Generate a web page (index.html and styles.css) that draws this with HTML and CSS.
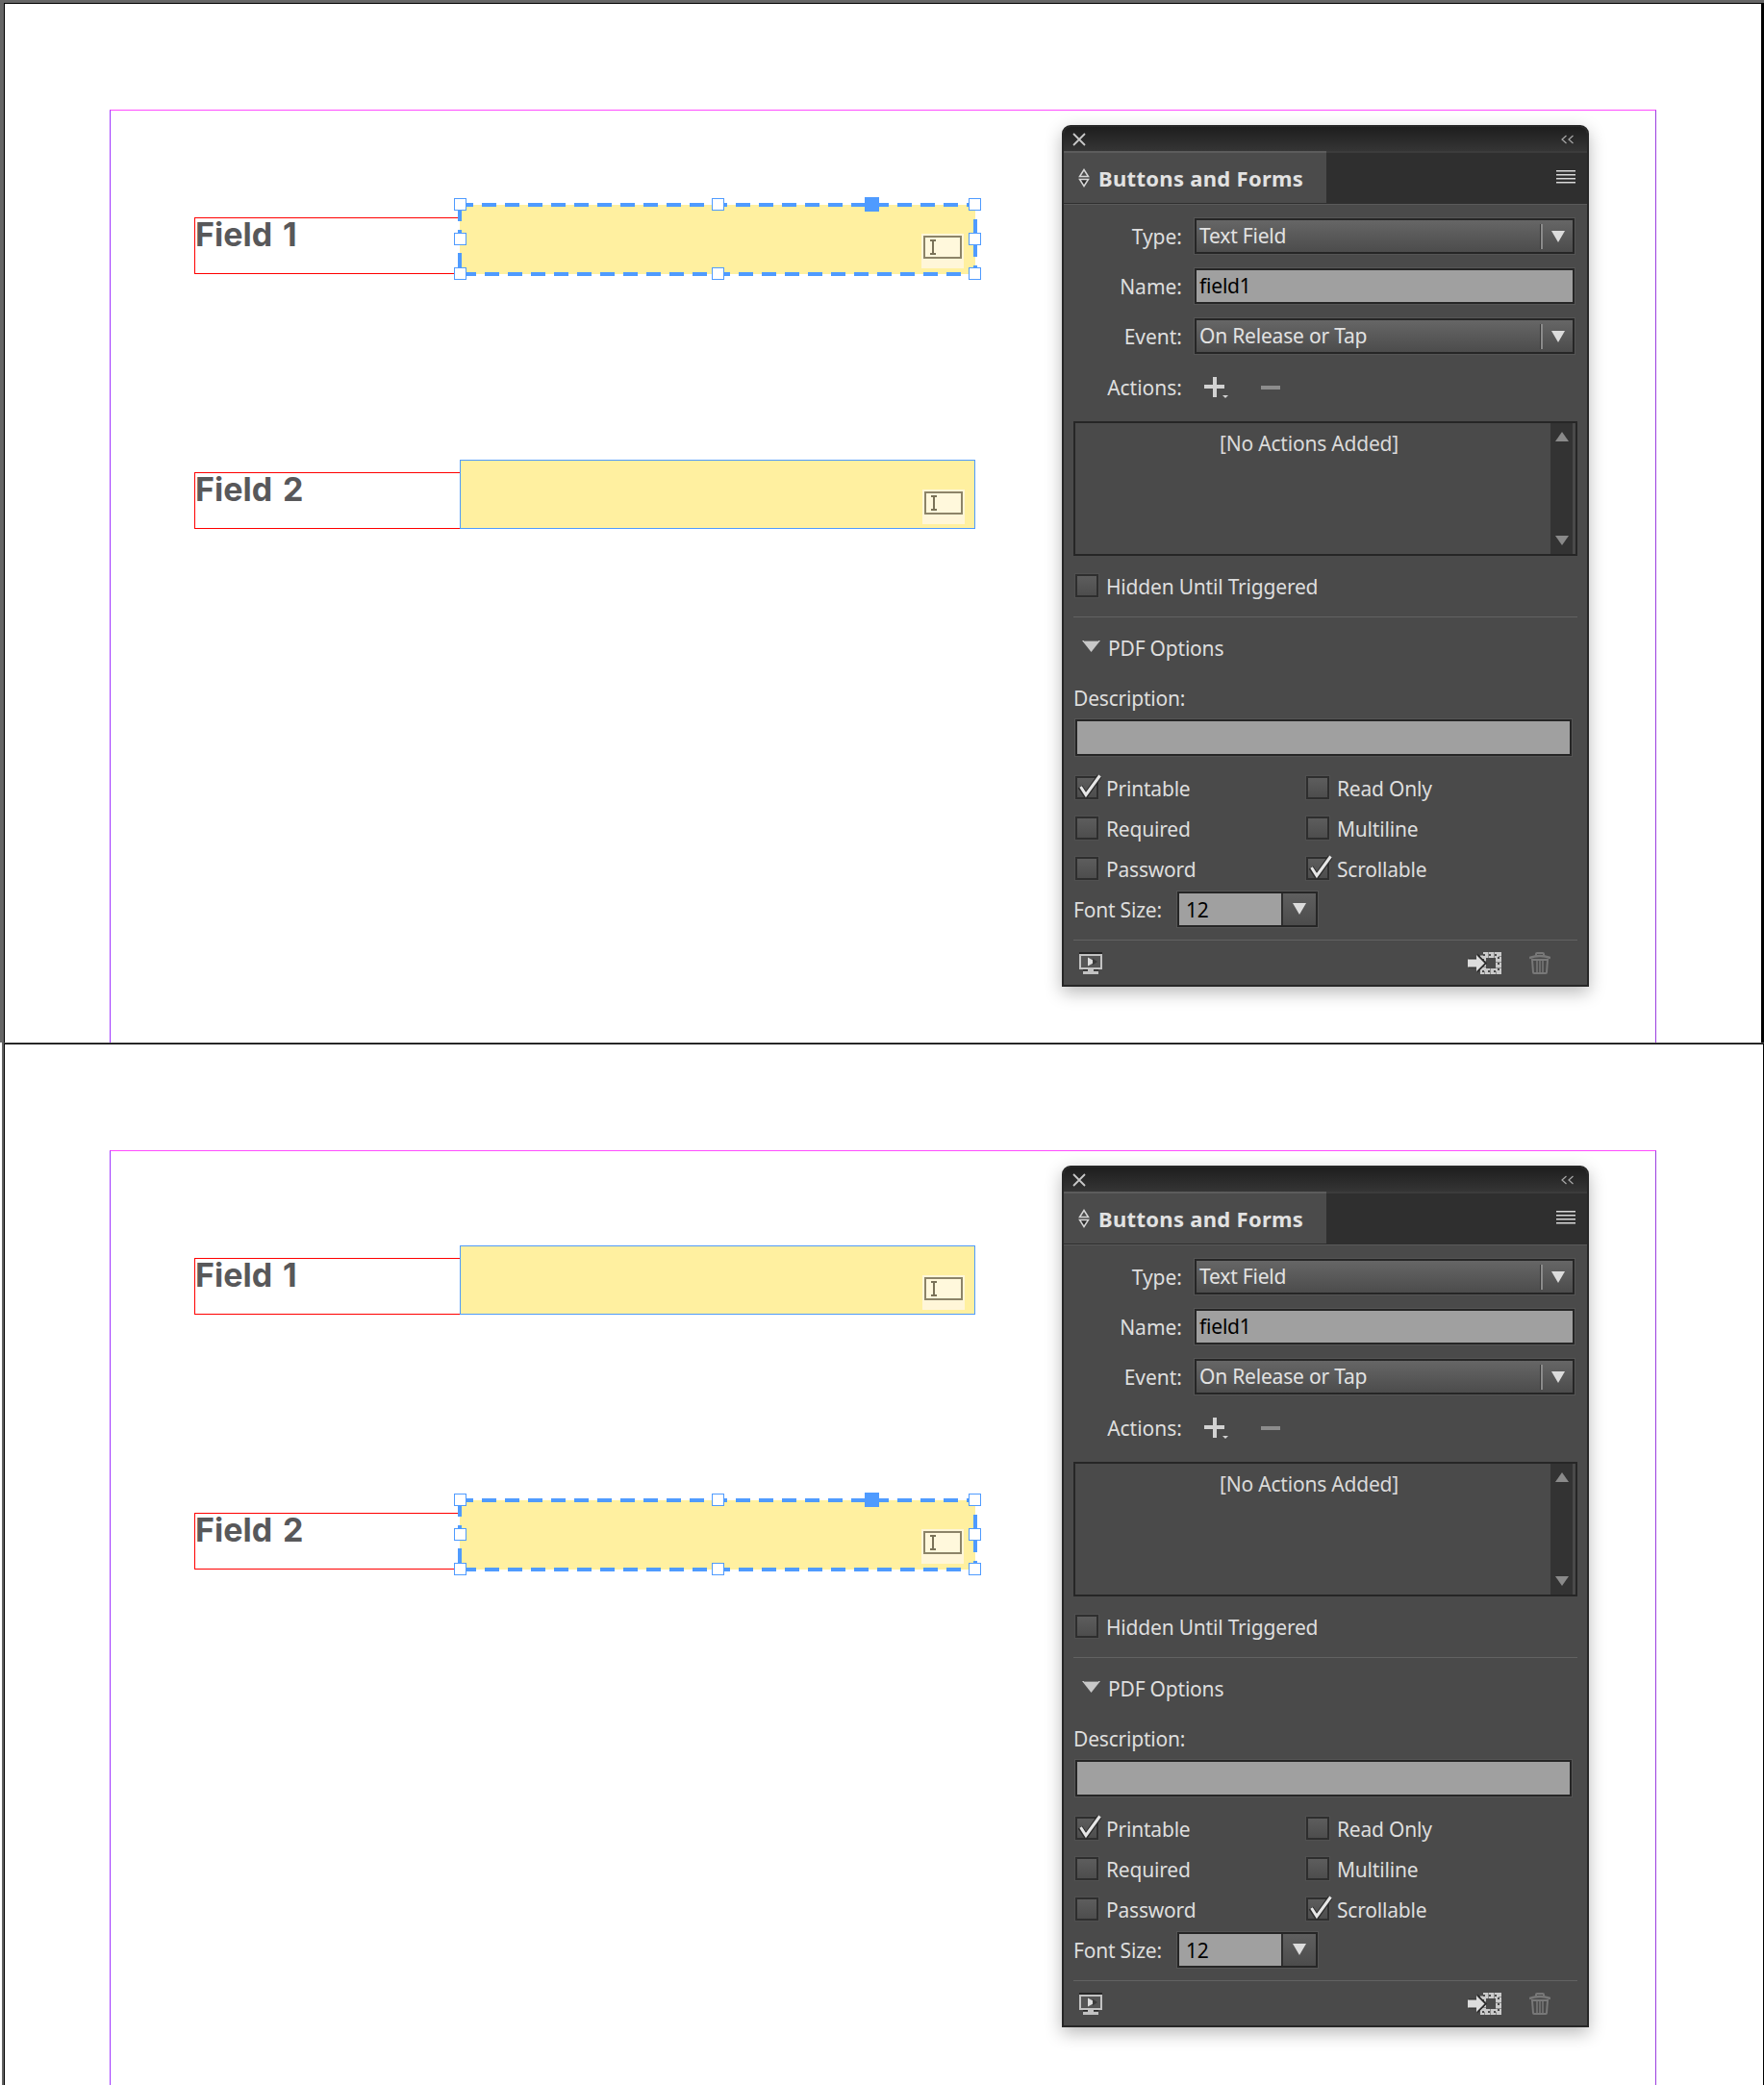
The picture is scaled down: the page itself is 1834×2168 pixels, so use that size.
FILE: index.html
```html
<!DOCTYPE html>
<html lang="en">
<head>
<meta charset="utf-8">
<title>Buttons and Forms</title>
<link rel="stylesheet" href="styles.css">
</head>
<body>
<svg class="defs" width="0" height="0" aria-hidden="true">
  <defs>
    <symbol id="i-close" viewBox="0 0 14 14"><path d="M1 1l12 12M13 1L1 13" stroke="#c8c8c8" stroke-width="1.800" fill="none"/></symbol>
    <symbol id="i-collapse" viewBox="0 0 16 10"><path d="M6.500 1L2 5l4.500 4M13.500 1L9 5l4.500 4" stroke="#a8a8a8" stroke-width="1.200" fill="none"/></symbol>
    <symbol id="i-diamond" viewBox="0 0 12 20"><path d="M6 1.500L10.500 8.500H1.500z" stroke="#d6d6d6" stroke-width="1.500" fill="none"/><path d="M1.500 11.500H10.500L6 18.500z" stroke="#d6d6d6" stroke-width="1.500" fill="#2a2a2a"/></symbol>
    <symbol id="i-menu" viewBox="0 0 20 15"><path d="M0 .75h20M0 4.750h20M0 8.750h20M0 12.750h20" stroke="#d8d8d8" stroke-width="1.500"/></symbol>
    <symbol id="i-down" viewBox="0 0 14 12"><path d="M0 0h14L7 12z" fill="#dcdcdc"/></symbol>
    <symbol id="i-disc" viewBox="0 0 19 12"><path d="M0 0h19L9.500 12z" fill="#c8c8c8"/><path d="M2 0h15" stroke="#2e2e2e" stroke-width="1"/></symbol>
    <symbol id="i-plus" viewBox="0 0 26 24"><path d="M10 1h4v8h8v4h-8v9h-4v-9H1V9h9z" fill="#d2d2d2"/><path d="M20 20h6l-3 3z" fill="#d2d2d2"/></symbol>
    <symbol id="i-up" viewBox="0 0 14 10"><path d="M7 0l7 10H0z" fill="#8a8a8a"/></symbol>
    <symbol id="i-dn" viewBox="0 0 14 10"><path d="M0 0h14L7 10z" fill="#8a8a8a"/></symbol>
    <symbol id="i-check" viewBox="0 0 26 26"><path d="M3 13l6 9L23 2" stroke="#2c2c2c" stroke-width="5.500" fill="none"/><path d="M3.500 13l5.500 8.500L23.500 1.500" stroke="#e6e6e6" stroke-width="3" fill="none"/></symbol>
    <symbol id="i-monitor" viewBox="0 0 24 23"><path d="M0 0h24v2H0z" fill="#262626"/><path d="M1 3h22v14H1z" fill="#555" stroke="#c2c2c2" stroke-width="2"/><path d="M9 5.500l8 4.500-8 4.500z" fill="#dcdcdc"/><path d="M14 6.500l5 3.500-5 3.500z" fill="#3a3a3a"/><path d="M4 18h16v1H4z" fill="#262626"/><path d="M9 18h6v2H9zM4 20h16v3H4z" fill="#c2c2c2"/></symbol>
    <symbol id="i-frame" viewBox="0 0 35 23"><rect x="16" y="3" width="16" height="17" fill="#4a4a4a" stroke="#cacaca" stroke-width="6" stroke-dasharray="5.500 .5"/><rect x="16" y="3" width="16" height="17" fill="none" stroke="#4a4a4a" stroke-width="2" stroke-dasharray="2 4"/><path d="M0 6.500h9V1.500l10 10-10 10v-5H0z" fill="#2a2a2a" transform="translate(1 0)"/><path d="M0 7.500h9V3l8.500 8.500L9 20v-4.500H0z" fill="#dcdcdc"/></symbol>
    <symbol id="i-trash" viewBox="0 0 22 23"><path d="M7 4V2q0-1 1-1h6q1 0 1 1v2" stroke="#787878" stroke-width="2" fill="none"/><path d="M0 6q11-4 22 0" stroke="#787878" stroke-width="2.500" fill="none"/><path d="M3 8h16l-1 13q0 1-1 1H5q-1 0-1-1z" fill="none" stroke="#787878" stroke-width="2"/><path d="M8 9v12M11 9v12M14 9v12" stroke="#787878" stroke-width="1.500"/></symbol>
    <symbol id="i-dash" viewBox="0 0 540 76"><rect x="2" y="2" width="536" height="72" fill="none" stroke="#4f9bff" stroke-width="4" stroke-dasharray="15 9" stroke-dashoffset="1"/></symbol>
  </defs>
</svg>

<main class="sheet">

<section class="shot shot-top">
  <div class="page">
    <div class="margins"></div>

    <div class="frame-row row-one">
      <div class="label-frame"><span class="label-text">Field 1</span></div>
      <div class="text-frame is-selected">
        <svg class="dash"><use href="#i-dash"/></svg>
        <span class="handle h-tl"></span><span class="handle h-tc"></span><span class="handle h-tr"></span>
        <span class="handle h-ml"></span><span class="handle h-mr"></span>
        <span class="handle h-bl"></span><span class="handle h-bc"></span><span class="handle h-br"></span>
        <span class="grip"></span>
        <span class="widget"><span class="widget-box"><span class="beam"></span></span></span>
      </div>
    </div>

    <div class="frame-row row-two">
      <div class="label-frame"><span class="label-text">Field 2</span></div>
      <div class="text-frame">
        <span class="widget"><span class="widget-box"><span class="beam"></span></span></span>
      </div>
    </div>

    <aside class="panel">
      <div class="titlebar">
        <svg class="ic-close"><use href="#i-close"/></svg>
        <svg class="ic-collapse"><use href="#i-collapse"/></svg>
      </div>
      <div class="tabs">
        <div class="tab"><svg class="ic-diamond"><use href="#i-diamond"/></svg><span class="tab-title">Buttons and Forms</span></div>
        <svg class="ic-menu"><use href="#i-menu"/></svg>
      </div>
      <div class="form">
        <div class="field-row"><span class="lbl">Type:</span><div class="select"><span class="select-text">Text Field</span><span class="select-sep"></span><svg class="ic-down"><use href="#i-down"/></svg></div></div>
        <div class="field-row"><span class="lbl">Name:</span><div class="input"><span class="input-text">field1</span></div></div>
        <div class="field-row"><span class="lbl">Event:</span><div class="select"><span class="select-text">On Release or Tap</span><span class="select-sep"></span><svg class="ic-down"><use href="#i-down"/></svg></div></div>
        <div class="actions-row"><span class="lbl">Actions:</span><svg class="ic-plus"><use href="#i-plus"/></svg><span class="minus"></span></div>
        <div class="list">
          <div class="list-body">[No Actions Added]</div>
          <div class="scrollbar"><svg class="ic-arrow"><use href="#i-up"/></svg><svg class="ic-arrow"><use href="#i-dn"/></svg></div>
        </div>
        <label class="check check-hidden"><span class="box"></span>Hidden Until Triggered</label>
        <hr class="rule rule-a">
        <div class="disclosure"><svg class="ic-disc"><use href="#i-disc"/></svg><span>PDF Options</span></div>
        <div class="desc-label">Description:</div>
        <div class="input input-desc"></div>
        <div class="checks">
          <label class="check"><span class="box"><svg class="ic-check"><use href="#i-check"/></svg></span>Printable</label>
          <label class="check"><span class="box"></span>Read Only</label>
          <label class="check"><span class="box"></span>Required</label>
          <label class="check"><span class="box"></span>Multiline</label>
          <label class="check"><span class="box"></span>Password</label>
          <label class="check"><span class="box"><svg class="ic-check"><use href="#i-check"/></svg></span>Scrollable</label>
        </div>
        <div class="font-row"><span class="font-lbl">Font Size:</span><div class="combo"><span class="combo-value">12</span><span class="combo-btn"><svg class="ic-down"><use href="#i-down"/></svg></span></div></div>
        <hr class="rule rule-b">
        <div class="footer">
          <svg class="ic-monitor"><use href="#i-monitor"/></svg>
          <svg class="ic-frame"><use href="#i-frame"/></svg>
          <svg class="ic-trash"><use href="#i-trash"/></svg>
        </div>
      </div>
    </aside>
  </div>
</section>

<section class="shot shot-bottom">
  <div class="page">
    <div class="margins"></div>

    <div class="frame-row row-one">
      <div class="label-frame"><span class="label-text">Field 1</span></div>
      <div class="text-frame">
        <span class="widget"><span class="widget-box"><span class="beam"></span></span></span>
      </div>
    </div>

    <div class="frame-row row-two">
      <div class="label-frame"><span class="label-text">Field 2</span></div>
      <div class="text-frame is-selected">
        <svg class="dash"><use href="#i-dash"/></svg>
        <span class="handle h-tl"></span><span class="handle h-tc"></span><span class="handle h-tr"></span>
        <span class="handle h-ml"></span><span class="handle h-mr"></span>
        <span class="handle h-bl"></span><span class="handle h-bc"></span><span class="handle h-br"></span>
        <span class="grip"></span>
        <span class="widget"><span class="widget-box"><span class="beam"></span></span></span>
      </div>
    </div>

    <aside class="panel">
      <div class="titlebar">
        <svg class="ic-close"><use href="#i-close"/></svg>
        <svg class="ic-collapse"><use href="#i-collapse"/></svg>
      </div>
      <div class="tabs">
        <div class="tab"><svg class="ic-diamond"><use href="#i-diamond"/></svg><span class="tab-title">Buttons and Forms</span></div>
        <svg class="ic-menu"><use href="#i-menu"/></svg>
      </div>
      <div class="form">
        <div class="field-row"><span class="lbl">Type:</span><div class="select"><span class="select-text">Text Field</span><span class="select-sep"></span><svg class="ic-down"><use href="#i-down"/></svg></div></div>
        <div class="field-row"><span class="lbl">Name:</span><div class="input"><span class="input-text">field1</span></div></div>
        <div class="field-row"><span class="lbl">Event:</span><div class="select"><span class="select-text">On Release or Tap</span><span class="select-sep"></span><svg class="ic-down"><use href="#i-down"/></svg></div></div>
        <div class="actions-row"><span class="lbl">Actions:</span><svg class="ic-plus"><use href="#i-plus"/></svg><span class="minus"></span></div>
        <div class="list">
          <div class="list-body">[No Actions Added]</div>
          <div class="scrollbar"><svg class="ic-arrow"><use href="#i-up"/></svg><svg class="ic-arrow"><use href="#i-dn"/></svg></div>
        </div>
        <label class="check check-hidden"><span class="box"></span>Hidden Until Triggered</label>
        <hr class="rule rule-a">
        <div class="disclosure"><svg class="ic-disc"><use href="#i-disc"/></svg><span>PDF Options</span></div>
        <div class="desc-label">Description:</div>
        <div class="input input-desc"></div>
        <div class="checks">
          <label class="check"><span class="box"><svg class="ic-check"><use href="#i-check"/></svg></span>Printable</label>
          <label class="check"><span class="box"></span>Read Only</label>
          <label class="check"><span class="box"></span>Required</label>
          <label class="check"><span class="box"></span>Multiline</label>
          <label class="check"><span class="box"></span>Password</label>
          <label class="check"><span class="box"><svg class="ic-check"><use href="#i-check"/></svg></span>Scrollable</label>
        </div>
        <div class="font-row"><span class="font-lbl">Font Size:</span><div class="combo"><span class="combo-value">12</span><span class="combo-btn"><svg class="ic-down"><use href="#i-down"/></svg></span></div></div>
        <hr class="rule rule-b">
        <div class="footer">
          <svg class="ic-monitor"><use href="#i-monitor"/></svg>
          <svg class="ic-frame"><use href="#i-frame"/></svg>
          <svg class="ic-trash"><use href="#i-trash"/></svg>
        </div>
      </div>
    </aside>
  </div>
</section>

</main>
</body>
</html>
```
FILE: styles.css
```css
* { box-sizing: border-box; }
html, body { margin: 0; padding: 0; background: #fff; }
body { width: 1834px; height: 2168px; overflow: hidden; font-family: "Noto Sans", sans-serif; }
.defs { position: absolute; }
svg { display: block; overflow: visible; }

.sheet { display: flex; flex-direction: column; }

/* screenshots of the document window */
.shot { height: 1084px; overflow: hidden; display: flex; }
.shot-top { width: 1834px; border-top: 3px solid #666; border-left: 4px solid #666; }
.shot-bottom { width: 1832px; margin-left: 2px; border-top: 1px solid #555; border-left: 2px solid #666; }
.page { position: relative; flex: 1; background: #fff; border-left: 1px solid #000; border-top: 1px solid #000; overflow: hidden; }
.shot-top .page { border-right: 3px solid #000; }
.shot-bottom .page { border-right: 1px solid #000; }

/* page margin guides */
.margins { position: absolute; left: 109px; top: 110px; width: 1608px; height: 1100px;
  border-top: 1px solid #ff4dff; border-left: 1px solid #a035ff; border-right: 1px solid #9b3fe0; }

/* frames on the document canvas */
.frame-row { position: absolute; left: 197px; display: flex; align-items: flex-end; }
.row-one { top: 209px; }
.row-two { top: 474px; }
.label-frame { width: 277px; height: 59px; border: 1px solid #f00; margin-right: -1px; padding-left: 0; }
.label-text { display: block; font: 700 34px/34px Inter, sans-serif; color: #58585a; margin-top: 0; word-spacing: 3px; white-space: nowrap; }
.text-frame { position: relative; width: 536px; height: 72px; background: #fff0a0; border: 1px solid #4f9bff; }
.text-frame.is-selected { border: 0; }
.dash { position: absolute; left: -2px; top: -2px; width: 540px; height: 76px; }
.handle { position: absolute; width: 13px; height: 13px; background: #fff; border: 1px solid #4f9bff; }
.h-tl, .h-ml, .h-bl { left: -6px; }
.h-tc, .h-bc { left: 262px; }
.h-tr, .h-mr, .h-br { left: 529px; }
.h-tl, .h-tc, .h-tr { top: -7px; }
.h-ml, .h-mr { top: 29px; }
.h-bl, .h-bc, .h-br { top: 65px; }
.grip { position: absolute; left: 421px; top: -8px; width: 15px; height: 15px; background: #4f9bff; }
.widget { position: absolute; left: 480px; top: 30px; width: 44px; height: 36px; background: #fff6d8; padding: 2px; }
.widget-box { display: block; position: relative; width: 40px; height: 24px; background: #fff8dc; border: 2px solid #8c8468; }
.beam { position: absolute; left: 7px; top: 2px; width: 2px; height: 16px; background: #7a7258; }
.beam::before, .beam::after { content: ""; position: absolute; left: -2px; width: 6px; height: 2px; background: #7a7258; }
.beam::before { top: 0; }
.beam::after { bottom: 0; }

/* floating panel */
.panel { position: absolute; left: 1099px; top: 126px; width: 548px; height: 896px; display: flex; flex-direction: column;
  background: #4a4a4a; border: 2px solid #272727; border-radius: 9px 9px 0 0;
  box-shadow: 0 6px 18px rgba(0, 0, 0, .28); color: #dedede; font-size: 21px; letter-spacing: -.2px; }
.titlebar { height: 25px; flex: none; display: flex; align-items: center; justify-content: space-between;
  padding: 0 12px 0 9px; background: linear-gradient(#1e1e1e, #353535); border-radius: 7px 7px 0 0; }
.ic-close { width: 14px; height: 14px; }
.ic-collapse { width: 16px; height: 10px; }
.tabs { height: 56px; flex: none; display: flex; align-items: flex-start; justify-content: space-between;
  background: #2f2f2f; border-top: 2px solid #3c3c3c; border-bottom: 1px solid #5a5a5a; padding-right: 12px; }
.tab { width: 273px; height: 54px; margin-top: -2px; background: #4b4b4b; border-top: 2px solid #5c5c5c;
  display: flex; align-items: center; padding: 0 0 1px 15px; gap: 9px; }
.ic-diamond { width: 12px; height: 20px; }
.tab-title { font-weight: 700; font-size: 22px; letter-spacing: .3px; color: #e2e2e2; white-space: nowrap; line-height: 30px; }
.ic-menu { width: 20px; height: 15px; margin-top: 18px; }

.form { display: flex; flex-direction: column; padding: 14px 10px 0; }
.field-row { display: grid; grid-template-columns: 113px 395px; column-gap: 13px; height: 37px; margin-bottom: 15px; align-items: center; }
.lbl { text-align: right; white-space: nowrap; line-height: 28px; padding-top: 1px; letter-spacing: 0; }
.select { height: 37px; display: flex; align-items: center; padding: 0 8px 0 3px; border: 2px solid #262626;
  background: linear-gradient(#666, #4c4c4c); box-shadow: 0 0 0 1px #555; line-height: 28px; }
.select-text { flex: 1; white-space: nowrap; color: #e2e2e2; padding-bottom: 1px; }
.select-sep { width: 3px; height: 26px; margin-right: 9px; background: linear-gradient(90deg, #3a3a3a 33%, #8a8a8a 33%); }
.ic-down { width: 14px; height: 12px; }
.input { height: 37px; background: #a0a0a0; border: 2px solid #262626; box-shadow: 0 0 0 1px #555; padding: 0 3px; display: flex; align-items: center; line-height: 28px; }
.input-text { color: #000; padding-bottom: 1px; }
.actions-row { height: 40px; margin-bottom: 15px; display: flex; align-items: center; }
.actions-row .lbl { width: 113px; padding-top: 0; }
.ic-plus { width: 26px; height: 24px; margin-left: 22px; }
.minus { width: 20px; height: 4px; margin-left: 34px; background: #8c8c8c; }
.list { height: 140px; display: flex; border: 2px solid #262626; padding: 0 3px 0 0; }
.list-body { flex: 1; text-align: center; padding: 7px 8px 0 0; line-height: 28px; color: #dadada; }
.scrollbar { width: 23px; background: #333; display: flex; flex-direction: column; justify-content: space-between; align-items: center; padding: 9px 0 9px; }
.ic-arrow { width: 14px; height: 10px; }
.check { display: flex; align-items: center; gap: 8px; height: 24px; padding-top: 2px; white-space: nowrap; line-height: 28px; }
.check-hidden { margin: 19px 0 0 2px; }
.box { position: relative; width: 24px; height: 24px; margin-bottom: 2px; flex: none; border: 2px solid #2e2e2e; background: linear-gradient(#5d5d5d, #4d4d4d); box-shadow: 0 0 0 1px #505050; }
.ic-check { position: absolute; left: 0; top: -4px; width: 26px; height: 26px; }
.rule { border: 0; height: 1px; margin: 0; background: #626262; }
.rule-a { margin-top: 20px; }
.disclosure { margin-top: 18px; height: 28px; margin-bottom: 2px; display: flex; align-items: center; padding-left: 9px; gap: 8px; line-height: 28px; }
.ic-disc { width: 19px; height: 12px; margin-top: -4px; }
.desc-label { margin-top: 22px; height: 30px; line-height: 28px; }
.input-desc { height: 38px; width: 516px; margin: 6px 0 0 2px; }
.checks { display: grid; grid-template-columns: 240px 1fr; row-gap: 18px; margin: 21px 0 0 2px; }
.font-row { display: flex; align-items: center; margin-top: 12px; height: 37px; line-height: 28px; }
.font-lbl { width: 108px; white-space: nowrap; padding-top: 1px; }
.combo { width: 146px; height: 37px; display: flex; border: 2px solid #262626; box-shadow: 0 0 0 1px #555; }
.combo-value { flex: 1; background: #a0a0a0; color: #000; padding: 3px 0 0 7px; }
.combo-btn { width: 36px; border-left: 2px solid #2e2e2e; background: linear-gradient(#5f5f5f, #4c4c4c); display: flex; align-items: flex-start; justify-content: center; padding-top: 10px; }
.rule-b { margin-top: 13px; }
.footer { display: flex; align-items: flex-start; margin-top: 12px; padding: 0 28px 0 6px; }
.ic-monitor { width: 24px; height: 23px; margin-right: auto; }
.ic-frame { width: 35px; height: 23px; margin-right: 29px; }
.ic-trash { width: 22px; height: 23px; }
```
